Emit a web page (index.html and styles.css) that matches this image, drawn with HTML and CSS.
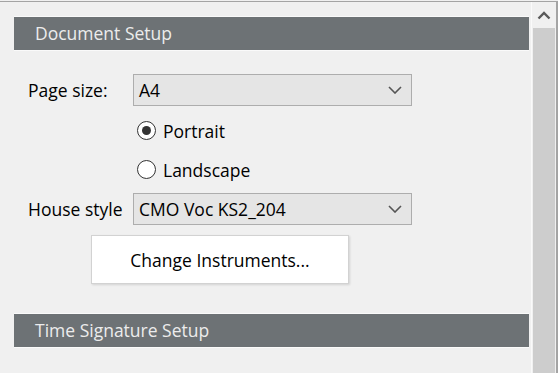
FILE: index.html
```html
<!DOCTYPE html>
<html lang="en">

<head>
  <meta charset="UTF-8">
  <meta name="viewport" content="width=device-width, initial-scale=1.0">
  <title>Document Setup</title>
  <link rel="stylesheet" href="styles.css">
</head>

<body>
  <div class="window">
    <section class="panel">
      <h2 class="section-head">Document Setup</h2>

      <div class="setup-form">
        <div class="form-row">
          <span class="form-label">Page size:</span>
          <div class="dropdown">
            <span class="dropdown-value">A4</span>
            <svg class="chevron" width="14" height="8" viewBox="0 0 14 8">
              <path d="M1 1l6 6 6-6" fill="none" stroke="#555" stroke-width="1.6" />
            </svg>
          </div>
        </div>

        <label class="radio-row radio-first">
          <span class="radio radio-checked"></span>
          <span class="radio-text">Portrait</span>
        </label>
        <label class="radio-row radio-last">
          <span class="radio"></span>
          <span class="radio-text">Landscape</span>
        </label>

        <div class="form-row">
          <span class="form-label">House style</span>
          <div class="dropdown">
            <span class="dropdown-value">CMO Voc KS2_204</span>
            <svg class="chevron" width="14" height="8" viewBox="0 0 14 8">
              <path d="M1 1l6 6 6-6" fill="none" stroke="#555" stroke-width="1.6" />
            </svg>
          </div>
        </div>

        <button class="push-button" type="button">Change Instruments...</button>
      </div>

      <h2 class="section-head section-time">Time Signature Setup</h2>
    </section>

    <div class="scrollbar">
      <div class="scroll-up">
        <svg width="14" height="9" viewBox="0 0 14 9">
          <path d="M1.5 7.5L7 2l5.5 5.5" fill="none" stroke="#5a5a5a" stroke-width="2.4" />
        </svg>
      </div>
      <div class="scroll-thumb"></div>
    </div>
  </div>
</body>

</html>
```

FILE: styles.css
```css
* {
  margin: 0;
  padding: 0;
  box-sizing: border-box;
}

html,
body {
  width: 100%;
  height: 100%;
  overflow: hidden;
}

body {
  background: #f0f0f0;
  font-family: 'Open Sans', 'Noto Sans', sans-serif;
  font-size: 17.5px;
  color: #000;
  padding-top: 1px;
}

.window {
  display: flex;
  height: 100%;
  border-top: 1px solid #a4a4a4;
  border-right: 2px solid #a4a4a4;
}

.panel {
  flex: 1;
  padding: 15px 2px 0 14px;
}

.section-head {
  height: 33px;
  line-height: 32px;
  background: #6d7275;
  color: #ececec;
  font-size: 17.5px;
  font-weight: normal;
  padding-left: 21px;
  box-shadow: 0 -1px 0 #fafafa, 0 1px 0 #fafafa;
}

.setup-form {
  padding-left: 14px;
  margin-top: 24px;
}

.form-row {
  display: flex;
  align-items: center;
}

.form-label {
  width: 105px;
}

.dropdown {
  width: 279px;
  height: 32px;
  background: #e5e5e5;
  border: 1px solid #adadad;
  display: flex;
  align-items: center;
  justify-content: space-between;
  padding: 0 9px 0 5px;
}

.radio-row {
  display: flex;
  align-items: center;
  height: 39px;
  padding-left: 105px;
}

.radio-first {
  margin-top: 5px;
}

.radio-last {
  margin-bottom: 4px;
}

.radio {
  width: 19px;
  height: 19px;
  border: 1.5px solid #333;
  border-radius: 50%;
  background: #fff;
  margin: 0 7px 0 4px;
  display: flex;
  align-items: center;
  justify-content: center;
}

.radio-checked::after {
  content: '';
  width: 9px;
  height: 9px;
  border-radius: 50%;
  background: #333;
}

.push-button {
  display: block;
  margin: 10px 0 0 63px;
  width: 258px;
  height: 49px;
  background: #fff;
  border: 1px solid #d2d2d2;
  box-shadow: 1px 1px 2px rgba(0, 0, 0, 0.12);
  font-family: inherit;
  font-size: 17.5px;
  color: #000;
}

.section-time {
  margin-top: 30px;
}

.scrollbar {
  width: 25px;
  display: flex;
  flex-direction: column;
  border-left: 1px solid #fafafa;
}

.scroll-up {
  height: 26px;
  display: flex;
  justify-content: center;
  align-items: center;
}

.scroll-thumb {
  flex: 1;
  background: #cdcdcd;
  margin: 0 1px;
}
```
